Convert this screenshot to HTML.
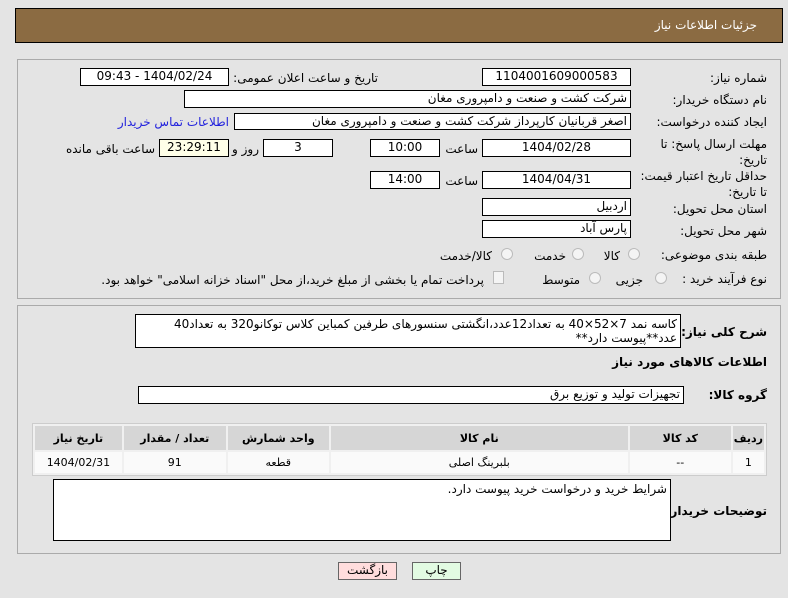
<!DOCTYPE html>
<html><head><meta charset="utf-8"><style>
body{margin:0;width:788px;height:598px;background:#e4e4e4;position:relative;overflow:hidden;font-family:"DejaVu Sans","Liberation Sans",sans-serif;font-size:11px;color:#000}
.a{position:absolute}
.box{position:absolute;background:#fff;border:1px solid #000;box-sizing:border-box;direction:rtl;white-space:nowrap;overflow:hidden;font-size:12px;line-height:15px}
.c{text-align:center}
.l{position:absolute;direction:rtl;white-space:nowrap;font-size:12px}
.panel{position:absolute;border:1px solid #aaa;box-sizing:border-box}
.rad{position:absolute;width:10px;height:10px;border:1px solid #bbb;border-radius:50%;background:#f4f4f4}
table{position:absolute;border-collapse:separate;border-spacing:2px;background:#f0f0f0;border:1px solid #ccc}
td{font-size:11px;text-align:center;padding:0}
th{background:#d6d6d6;font-size:11px;height:22px;font-weight:bold}
</style></head><body>
<div class="a" style="left:15px;top:8px;width:768px;height:35px;background:#8b6b42;border:1px solid #000;box-sizing:border-box"></div>
<div class="l" style="right:31px;top:18px;color:#fff;font-size:12px">جزئیات اطلاعات نیاز</div>

<div class="panel" style="left:17px;top:59px;width:764px;height:240px"></div>
<div class="l" style="right:21px;top:71px">شماره نیاز:</div>
<div class="box c" style="left:482px;top:68px;width:149px;height:18px">1104001609000583</div>
<div class="l" style="right:410px;top:71px">تاریخ و ساعت اعلان عمومی:</div>
<div class="box c" style="left:80px;top:68px;width:149px;height:18px">1404/02/24 - 09:43</div>

<div class="l" style="right:21px;top:93px">نام دستگاه خریدار:</div>
<div class="box" style="left:184px;top:90px;width:447px;height:18px;padding-right:3px">شرکت کشت و صنعت و دامپروری مغان</div>

<div class="l" style="right:21px;top:115px">ایجاد کننده درخواست:</div>
<div class="box" style="left:234px;top:113px;width:397px;height:17px;padding-right:3px">اصغر قربانیان کارپرداز شرکت کشت و صنعت و دامپروری مغان</div>
<div class="l" style="right:559px;top:115px;color:#2222dd">اطلاعات تماس خریدار</div>

<div class="l" style="right:21px;top:136px;line-height:16px">مهلت ارسال پاسخ: تا<br>تاریخ:</div>
<div class="box c" style="left:482px;top:139px;width:149px;height:18px">1404/02/28</div>
<div class="l" style="right:310px;top:142px">ساعت</div>
<div class="box c" style="left:370px;top:139px;width:70px;height:18px">10:00</div>
<div class="box c" style="left:263px;top:139px;width:70px;height:18px">3</div>
<div class="l" style="right:529px;top:142px">روز و</div>
<div class="box c" style="left:159px;top:139px;width:70px;height:18px;background:#ffffe8">23:29:11</div>
<div class="l" style="right:633px;top:142px">ساعت باقی مانده</div>

<div class="l" style="right:21px;top:168px;line-height:16px">حداقل تاریخ اعتبار قیمت:<br>تا تاریخ:</div>
<div class="box c" style="left:482px;top:171px;width:149px;height:18px">1404/04/31</div>
<div class="l" style="right:310px;top:174px">ساعت</div>
<div class="box c" style="left:370px;top:171px;width:70px;height:18px">14:00</div>

<div class="l" style="right:21px;top:202px">استان محل تحویل:</div>
<div class="box" style="left:482px;top:198px;width:149px;height:18px;padding-right:3px">اردبیل</div>
<div class="l" style="right:21px;top:224px">شهر محل تحویل:</div>
<div class="box" style="left:482px;top:220px;width:149px;height:18px;padding-right:3px">پارس آباد</div>

<div class="l" style="right:21px;top:248px">طبقه بندی موضوعی:</div>
<div class="rad" style="left:628px;top:248px"></div><div class="l" style="right:168px;top:249px">کالا</div>
<div class="rad" style="left:572px;top:248px"></div><div class="l" style="right:222px;top:249px">خدمت</div>
<div class="rad" style="left:501px;top:248px"></div><div class="l" style="right:296px;top:249px">کالا/خدمت</div>

<div class="l" style="right:21px;top:272px">نوع فرآیند خرید :</div>
<div class="rad" style="left:655px;top:272px"></div><div class="l" style="right:145px;top:273px">جزیی</div>
<div class="rad" style="left:589px;top:272px"></div><div class="l" style="right:208px;top:273px">متوسط</div>
<div class="a" style="left:493px;top:271px;width:9px;height:11px;border:1px solid #bbb;background:#f4f4f4"></div>
<div class="l" style="right:304px;top:273px">پرداخت تمام یا بخشی از مبلغ خرید،از محل "اسناد خزانه اسلامی" خواهد بود.</div>

<div class="panel" style="left:17px;top:305px;width:764px;height:249px"></div>
<div class="l" style="right:21px;top:325px;font-weight:bold">شرح کلی نیاز:</div>
<div class="box" style="left:135px;top:314px;width:546px;height:34px;white-space:normal;padding:2px 3px;line-height:14px">کاسه نمد 7×52×40 به تعداد12عدد،انگشتی سنسورهای طرفین کمباین کلاس توکانو320 به تعداد40 عدد**پیوست دارد**</div>
<div class="l" style="right:21px;top:355px;font-weight:bold">اطلاعات کالاهای مورد نیاز</div>
<div class="l" style="right:21px;top:388px;font-weight:bold">گروه کالا:</div>
<div class="box" style="left:138px;top:386px;width:546px;height:18px;padding-right:3px">تجهیزات تولید و توزیع برق</div>

<table style="left:32px;top:423px;width:735px;direction:rtl">
<tr><th style="width:27px">ردیف</th><th style="width:99px">کد کالا</th><th style="width:295px">نام کالا</th><th style="width:99px">واحد شمارش</th><th style="width:100px">تعداد / مقدار</th><th>تاریخ نیاز</th></tr>
<tr style="background:#fafafa;height:21px"><td>1</td><td>--</td><td>بلبرینگ اصلی</td><td>قطعه</td><td>91</td><td>1404/02/31</td></tr>
</table>

<div class="l" style="right:21px;top:504px;font-weight:bold">توضیحات خریدار:</div>
<div class="box" style="left:53px;top:479px;width:618px;height:62px;padding:2px 3px">شرایط خرید و درخواست خرید پیوست دارد.</div>

<div class="box c" style="left:338px;top:562px;width:59px;height:18px;background:#fdd;border-color:#666">بازگشت</div>
<div class="box c" style="left:412px;top:562px;width:49px;height:18px;background:#e2fbe2;border-color:#666">چاپ</div>
</body></html>
